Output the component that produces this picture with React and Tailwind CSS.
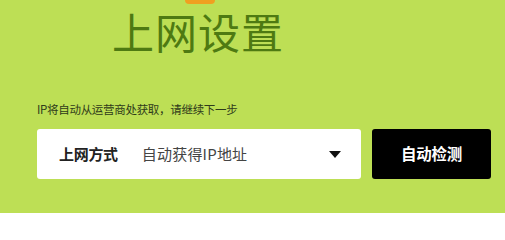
export default function App() {
  return (
    <div
      className="w-[505px] h-[213px] bg-[#bddf55] overflow-hidden"
      style={{ fontFamily: '"Noto Sans CJK SC", "Microsoft YaHei", sans-serif' }}
    >
      {/* logo edge + title */}
      <div className="ml-[185px] w-[30px] h-[4px] rounded-b-full bg-[#f0a020]" />
      <h1 className="ml-[112px] mt-[4px] text-[42px] leading-[46px] font-normal text-[#4e7a12] tracking-[1px]">
        上网设置
      </h1>

      <div className="pl-[37px] mt-[48px]">
        <p className="text-[11.5px] leading-[14px] text-[#2f3a1a] tracking-[-0.3px]">
          IP将自动从运营商处获取，请继续下一步
        </p>

        <div className="flex gap-[11px] mt-[13px]">
          <div className="shrink-0 w-[324px] h-[50px] bg-white rounded-[3px] flex items-center pl-[22px] pr-[20px]">
            <span className="text-[15px] font-bold text-[#222] tracking-[-0.3px]">上网方式</span>
            <span className="ml-[24px] text-[15px] text-[#444] tracking-[0.2px]">自动获得IP地址</span>
            <svg className="ml-auto" width="12" height="7" viewBox="0 0 12 7">
              <path d="M0 0 H12 L6 7 Z" fill="#111" />
            </svg>
          </div>
          <button className="shrink-0 w-[119px] h-[50px] bg-black rounded-[3px] text-white text-[15.5px] font-bold tracking-[-0.3px]">
            自动检测
          </button>
        </div>
      </div>
    </div>
  );
}
